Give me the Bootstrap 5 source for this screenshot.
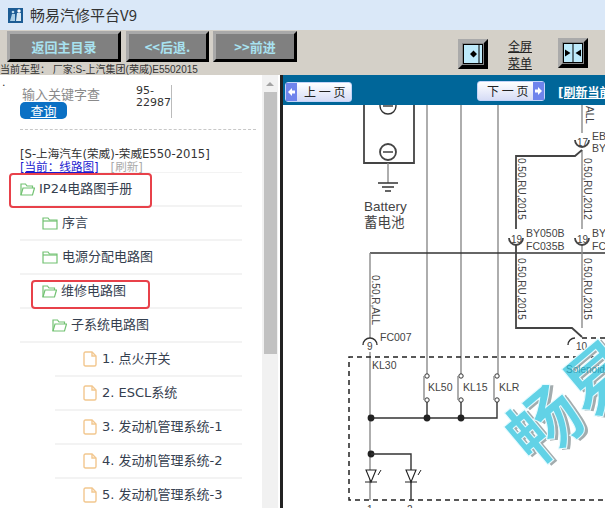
<!DOCTYPE html>
<html lang="zh-CN">
<head>
  <meta charset="UTF-8">
  <title>畅易汽修平台V9</title>
  <link href="https://cdn.jsdelivr.net/npm/bootstrap@5.3.0/dist/css/bootstrap.min.css" rel="stylesheet">
  <style>
    html, body { height: 100%; overflow: hidden; }
    body { font-family: "DejaVu Sans", "Noto Sans CJK SC", sans-serif; background: #fff; color: #333; }
    .app-shell { width: 605px; height: 508px; overflow: hidden; }
    .title-strip { height: 30px; background: #dae8f8; padding-left: 8px; gap: 7px; font-family: "Noto Sans CJK SC", sans-serif; font-size: 15px; color: #333; }
    .tool-strip { height: 45px; background: #d4d0c8; position: relative; }
    .tool-row { height: 34px; padding: 1px 0 0 7px; }
    .tool-btn { height: 31px; background: #808080; color: #a8e2f0; font: bold 13px "Noto Sans CJK SC", sans-serif; border: 3px solid; border-color: #a9a9a9 #000 #000 #a9a9a9; text-decoration: none; }
    .tb-home { width: 114px; margin-right: 5px; }
    .tb-back { width: 83px; margin-right: 4px; }
    .tb-next { width: 84px; }
    .square-btn { position: absolute; width: 30px; height: 30px; }
    .sq-one { left: 458px; top: 9px; }
    .sq-two { left: 558px; top: 8px; }
    .full-link { position: absolute; left: 508px; top: 7px; font: 12px/17px "Noto Sans CJK SC", sans-serif; color: #222; text-decoration: underline; text-align: center; width: 24px; }
    .car-line { font: 10px/11px "Liberation Sans", "Noto Sans CJK SC", sans-serif; color: #333; white-space: nowrap; }
    .work-area { height: 433px; }
    .side-panel { width: 283px; border-right: 3px solid #222; }
    .side-body { width: 262px; position: relative; overflow: hidden; }
    .dot-mark { position: absolute; left: 2px; top: 0; font-size: 11px; line-height: 16px; }
    .search-row { height: 54px; padding-left: 20px; position: relative; }
    .search-hint { position: absolute; left: 22px; top: 9px; font: 13px/20px "Noto Sans CJK SC", sans-serif; color: #8a8a8a; }
    .search-val { position: absolute; left: 136px; top: 10px; width: 36px; height: 33px; border-right: 1px solid #bbb; font-size: 11px; line-height: 11.5px; color: #333; }
    .search-go { position: absolute; left: 20px; top: 27px; width: 47px; height: 17px; background: #0b70c4; color: #fff; border-radius: 5px; font: 13px/17px "Noto Sans CJK SC", sans-serif; text-align: center; text-decoration: underline; }
    .dash-rule { margin: 0 6px 0 20px; border-top: 1px dashed #c8c8c8; }
    .car-title { padding: 18px 0 0 20px; font-size: 11.6px; line-height: 13px; color: #333; white-space: nowrap; }
    .now-link { color: #1a1ad0; text-decoration: underline; }
    .fresh-link { color: #aaa; margin-left: 12px; }
    .tree-list { margin: -2px 0 0 20px; padding: 0; list-style: none; width: 222px; border-top: 1px solid #f3f3f3; }
    .tree-row { height: 34px; border-bottom: 2px solid #f3f3f3; font-size: 13px; color: #35404f; white-space: nowrap; position: relative; }
    .tree-row svg { flex: none; margin-right: 4px; }
    .lv0 { padding-left: 0; }
    .lv1 { padding-left: 22px; }
    .lv2 { padding-left: 32px; }
    .lv3 { padding-left: 63px; margin-left: 35px; }
    .lv3 svg { margin-left: -35px; margin-right: 5px; }
    .red-box { position: absolute; border: 2px solid #e8414a; border-radius: 4px; pointer-events: none; }
    .rb-top { left: -11px; top: 0; width: 143px; height: 35px; }
    .rb-mid { left: 11px; top: 5px; width: 119px; height: 29px; }
    .scroll-col { width: 16px; background: #f1f1f1; position: relative; }
    .scroll-up { position: absolute; left: 4px; top: 7px; width: 0; height: 0; border: 4px solid transparent; border-bottom: 4px solid #a3a3a3; border-top: 0; }
    .scroll-thumb { position: absolute; left: 2px; top: 17px; width: 13px; height: 262px; background: #c1c1c1; }
    .view-panel { width: 322px; overflow: hidden; }
    .pager-bar { height: 30px; background: #006699; position: relative; }
    .page-btn { position: absolute; top: 7px; height: 20px; background: linear-gradient(#fff, #d6dcf6); border: 1px solid #c4d4f8; border-radius: 3px; font: 12px/18px "Noto Sans CJK SC", sans-serif; color: #222; white-space: pre; }
    .pb-prev { left: 2px; width: 67px; padding-left: 18px; }
    .pb-next { left: 194px; top: 6px; width: 68px; padding-left: 9px; }
    .pg-arrow { position: absolute; top: 0; width: 11px; height: 18px; background: #6f84ec; }
    .pg-arrow svg { display: block; }
    .pb-prev .pg-arrow { left: 0; }
    .pb-next .pg-arrow { right: 0; }
    .reload-link { position: absolute; left: 275px; top: 10px; color: #fff; font: bold 12px/16px "DejaVu Sans", "Noto Sans CJK SC", sans-serif; text-decoration: underline; white-space: nowrap; }
    .wire-map { display: block; }
    .wire-map text { font-family: "Liberation Sans", "Noto Sans CJK SC", sans-serif; fill: #444; }
    .wire-map .mark-shade { fill: #a3acae; font-family: "Noto Sans CJK SC", sans-serif; font-weight: 700; }
    .wire-map .mark-face { fill: #62d2e6; stroke: #e8fbff; stroke-width: 1; font-family: "Noto Sans CJK SC", sans-serif; font-weight: 700; }
    .wire-map .mark-over { fill: #2f9fb5; }
    .wire-gray { stroke: #8c8c8c; stroke-width: 1.4; fill: none; }
    .wire-dark { stroke: #333; stroke-width: 1.4; fill: none; }
    .wire-thick { stroke: #444; stroke-width: 1.8; fill: none; }
  </style>
</head>
<body>
<div class="app-shell d-flex flex-column">

  <!-- title -->
  <div class="title-strip d-flex align-items-center">
    <svg width="15" height="15" viewBox="0 0 15 15"><rect width="15" height="15" fill="#1c5c94"/><path d="M2 13 L4 6 L7 6 L7 13Z" fill="#a9cfe6"/><path d="M8 13 L9 5 L13 5 L13 13Z" fill="#d6e8f3"/><circle cx="11" cy="3" r="1.7" fill="#fff"/><circle cx="5" cy="4" r="1.3" fill="#bcdcee"/></svg>
    <span>畅易汽修平台V9</span>
  </div>

  <!-- toolbar -->
  <div class="tool-strip">
    <div class="tool-row d-flex">
      <a class="tool-btn tb-home d-flex align-items-center justify-content-center">返回主目录</a>
      <a class="tool-btn tb-back d-flex align-items-center justify-content-center">&lt;&lt;后退.</a>
      <a class="tool-btn tb-next d-flex align-items-center justify-content-center">&gt;&gt;前进</a>
    </div>
    <svg class="square-btn sq-one" viewBox="0 0 30 30"><rect width="30" height="30" fill="#868686"/><path d="M0 0H30L26 4H4V26L0 30Z" fill="#aaa"/><path d="M30 0V30H0L4 26H26V4Z" fill="#000"/><rect x="5.5" y="5.5" width="19" height="19" fill="#bdeafb" stroke="#000"/><line x1="21" y1="6" x2="21" y2="24" stroke="#000"/><path d="M12 15L15.5 11.5V18.5Z M19 15L15.5 11.5V18.5Z" fill="#000"/></svg>
    <a class="full-link">全屏<br>菜单</a>
    <svg class="square-btn sq-two" viewBox="0 0 30 30"><rect width="30" height="30" fill="#868686"/><path d="M0 0H30L26 4H4V26L0 30Z" fill="#aaa"/><path d="M30 0V30H0L4 26H26V4Z" fill="#000"/><rect x="5.5" y="5.5" width="19" height="19" fill="#bdeafb" stroke="#000"/><line x1="15" y1="6" x2="15" y2="24" stroke="#000"/><path d="M7 11.5L12.5 15L7 18.5Z M23 11.5L17.5 15L23 18.5Z" fill="#000"/></svg>
    <div class="car-line">当前车型： 厂家:S-上汽集团(荣威)E5502015</div>
  </div>

  <div class="work-area d-flex">
    <!-- left menu -->
    <div class="side-panel d-flex">
      <div class="side-body flex-shrink-0">
        <span class="dot-mark">.</span>
        <div class="search-row">
          <span class="search-hint">输入关键字查</span>
          <span class="search-val">95-<br>22987</span>
          <span class="search-go">查询</span>
        </div>
        <div class="dash-rule"></div>
        <div class="car-title">[S-上海汽车(荣威)-荣威E550-2015]<br><span class="now-link">[当前：线路图]</span><span class="fresh-link">[刷新]</span></div>
        <ul class="tree-list" id="treeList"></ul>
      </div>
      <div class="scroll-col flex-shrink-0">
        <span class="scroll-up"></span>
        <span class="scroll-thumb"></span>
      </div>
      <div class="flex-grow-1"></div>
    </div>

    <!-- wiring page -->
    <div class="view-panel">
      <div class="pager-bar">
        <span class="page-btn pb-prev"><span class="pg-arrow"><svg width="11" height="18" viewBox="0 0 11 18"><path d="M2 9L6 5V7.5H9V10.5H6V13Z" fill="#fff"/></svg></span>上 一 页</span>
        <span class="page-btn pb-next">下 一 页<span class="pg-arrow"><svg width="11" height="18" viewBox="0 0 11 18"><path d="M9 9L5 5V7.5H2V10.5H5V13Z" fill="#fff"/></svg></span></span>
        <a class="reload-link">[刷新当前页]</a>
      </div>
      <svg class="wire-map" width="322" height="403" viewBox="283 105 322 403">
        <!-- battery -->
        <path class="wire-thick" d="M364 105V163H414V105"/>
        <circle cx="388" cy="106" r="8" class="wire-dark"/><line x1="383" y1="106" x2="393" y2="106" class="wire-dark"/>
        <circle cx="388" cy="152" r="8" class="wire-thick"/><line x1="383" y1="152" x2="393" y2="152" class="wire-dark"/>
        <path class="wire-gray" d="M388 163V183"/>
        <path class="wire-dark" d="M378 183H398M382 187H394M385 191H391"/>
        <text x="364" y="211" font-size="13.5">Battery</text>
        <text x="364" y="227" font-size="13.5">蓄电池</text>

        <!-- feeds -->
        <path class="wire-gray" d="M427 105V374M461 105V374M498 105V374"/>
        <path class="wire-dark" d="M370 253H605"/>
        <path class="wire-gray" d="M370 253V338M370 352V500"/>
        <text font-size="10" transform="translate(372 275) rotate(90)">0.50,R,ALL</text>

        <!-- 17 / 19 -->
        <path class="wire-gray" d="M582 105V133M582 150V229M582 245V328"/>
        <path class="wire-thick" d="M516 229V156H575L582 150"/>
        <path class="wire-thick" d="M575 140a7 7 0 0 0 14 0"/>
        <text x="577" y="146" font-size="10">17</text>
        <text x="592" y="140" font-size="10.5">EB</text><text x="592" y="152" font-size="10.5">BY</text>
        <text font-size="10" transform="translate(586 106) rotate(90)">ALL</text>
        <text font-size="10" transform="translate(518 158) rotate(90)">0.50,RU,2015</text>
        <text font-size="10" transform="translate(584 158) rotate(90)">0.50,RU,2012</text>
        <path class="wire-thick" d="M509 238a7 7 0 0 0 14 0M575 238a7 7 0 0 0 14 0"/>
        <text x="511" y="243" font-size="10">19</text><text x="577" y="243" font-size="10">19</text>
        <text x="526" y="237" font-size="10.5">BY050B</text><text x="526" y="250" font-size="10.5">FC035B</text>
        <text x="592" y="237" font-size="10.5">BY</text><text x="592" y="250" font-size="10.5">FC</text>
        <path class="wire-thick" d="M516 245V328H572L582 337"/>
        <text font-size="10" transform="translate(518 258) rotate(90)">0.50,RU,2015</text>
        <text font-size="10" transform="translate(584 258) rotate(90)">0.50,RU,2015</text>

        <!-- connectors -->
        <path class="wire-dark" d="M363 345a7 7 0 0 1 14 0M568 345a7 7 0 0 1 7 -7"/>
        <text x="367" y="350" font-size="10">9</text><text x="576" y="350" font-size="10">10</text>
        <text x="380" y="341" font-size="10.5">FC007</text>
        <text x="372" y="369" font-size="10.5">KL30</text>

        <!-- module -->
        <path d="M605 357H349V500H605M582 338H605" fill="none" stroke="#222" stroke-width="1.5" stroke-dasharray="5 4"/>
        <g fill="#fff" stroke="#333"><circle cx="427" cy="376" r="2.2"/><circle cx="427" cy="400" r="2.2"/><circle cx="461" cy="376" r="2.2"/><circle cx="461" cy="400" r="2.2"/><circle cx="497" cy="376" r="2.2"/><circle cx="497" cy="400" r="2.2"/></g>
        <path class="wire-gray" d="M424 376V400M458 376V400M494 376V400"/>
        <text x="428" y="391" font-size="10.5">KL50</text><text x="463" y="391" font-size="10.5">KL15</text><text x="499" y="391" font-size="10.5">KLR</text>
        <path class="wire-dark" d="M371 418H497V402M427 402V418M461 402V418"/>
        <g fill="#222"><circle cx="371" cy="418" r="3.4"/><circle cx="427" cy="418" r="3.4"/><circle cx="461" cy="418" r="3.4"/><circle cx="371" cy="454" r="3.4"/></g>
        <path class="wire-dark" d="M371 454H411V500"/>
        <g fill="#fff" stroke="#222" stroke-width="1.1"><path d="M366 470H376L371 482Z"/><path d="M406 470H416L411 482Z"/></g>
        <path d="M365 482H377M405 482H417M378 475L381 470M418 475L421 470" stroke="#222" fill="none"/>
        <text x="367" y="513" font-size="10">1</text><text x="407" y="513" font-size="10">2</text>

        <!-- watermark -->
        <g transform="translate(534 468) rotate(-40)" font-size="72">
          <text class="mark-shade" x="2" y="3">畅易</text>
          <text class="mark-face" x="0" y="0">畅易</text>
        </g>
        <text class="mark-over" x="566" y="373" font-size="10">Solenoid</text>
      </svg>
    </div>
  </div>
</div>

<script src="https://cdn.jsdelivr.net/npm/bootstrap@5.3.0/dist/js/bootstrap.bundle.min.js"></script>
<script>
  const openFolder = '<svg width="15" height="14" viewBox="0 0 15 14" fill="none" stroke="#72c272" stroke-width="1.2"><path d="M1 13V2H5.5L7 4H12.5V6"/><path d="M1 13L3 6H14.5L12.5 13Z"/></svg>';
  const shutFolder = '<svg width="16" height="14" viewBox="0 0 16 14" fill="none" stroke="#72c272" stroke-width="1.2"><path d="M1 13V2H6L7.5 4H15V13Z"/><path d="M1 5H15"/></svg>';
  const pageIcon = '<svg width="14" height="16" viewBox="0 0 14 16" fill="none" stroke="#f2c78f" stroke-width="1.4"><path d="M1 2.5Q1 1 2.5 1H9L13 5V13.5Q13 15 11.5 15H2.5Q1 15 1 13.5Z"/><path d="M9 1V5H13"/></svg>';

  const rows = [
    ['lv0', openFolder, 'IP24电路图手册', 'rb-top'],
    ['lv1', shutFolder, '序言'],
    ['lv1', shutFolder, '电源分配电路图'],
    ['lv1', openFolder, '维修电路图', 'rb-mid'],
    ['lv2', openFolder, '子系统电路图'],
    ['lv3', pageIcon, '1. 点火开关'],
    ['lv3', pageIcon, '2. ESCL系统'],
    ['lv3', pageIcon, '3. 发动机管理系统-1'],
    ['lv3', pageIcon, '4. 发动机管理系统-2'],
    ['lv3', pageIcon, '5. 发动机管理系统-3']
  ];

  document.getElementById('treeList').innerHTML = rows.map(r =>
    `<li class="tree-row d-flex align-items-center ${r[0]}">${r[1]}<span>${r[2]}</span>${r[3] ? `<span class="red-box ${r[3]}"></span>` : ''}</li>`
  ).join('');
</script>
</body>
</html>
